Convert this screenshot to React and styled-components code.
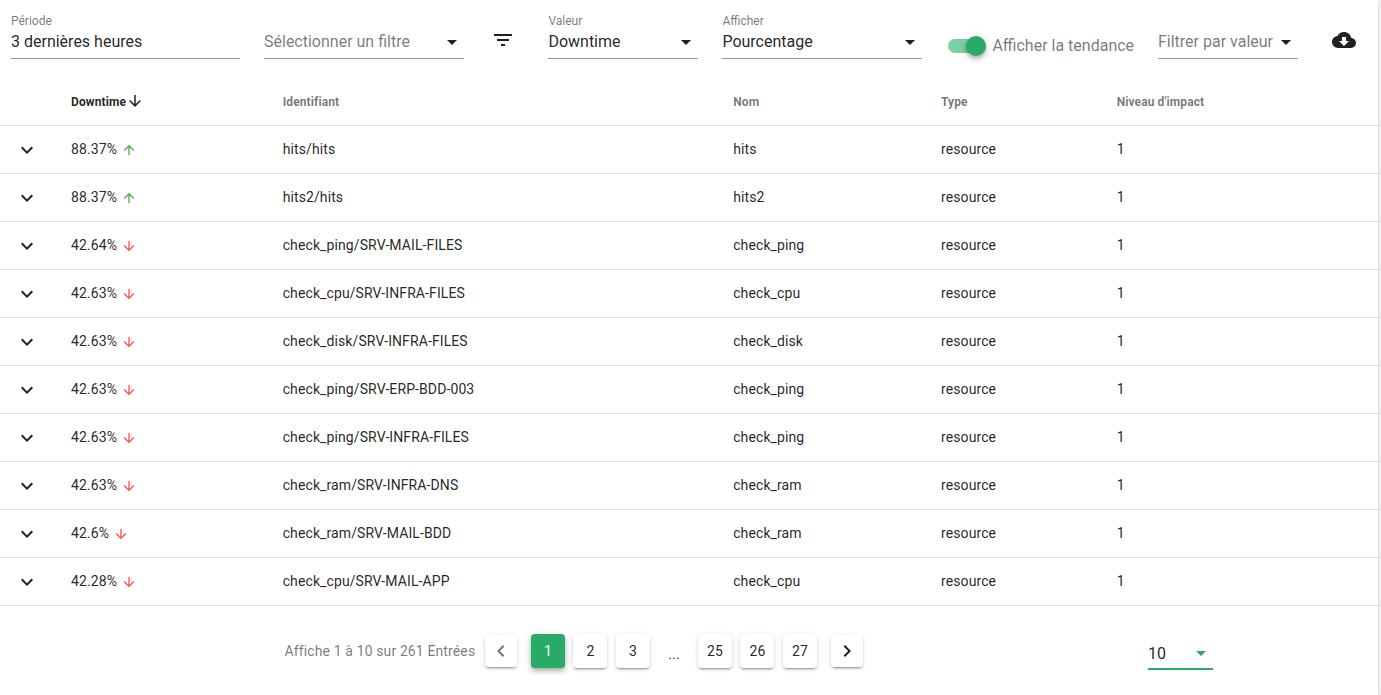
import React from "react";
import styled, { createGlobalStyle } from "styled-components";

const GlobalStyle = createGlobalStyle`
  *, *::before, *::after { box-sizing: border-box; }
  html, body { margin: 0; height: 100%; overflow: hidden; }
  body { background: #f7f7f7; font-family: Roboto, "Liberation Sans", sans-serif; color: rgba(0, 0, 0, 0.87); }
  button { font-family: inherit; }
`;

const PATHS = {
  menuDown: "M7,10L12,15L17,10H7Z",
  filter: "M6,13H18V11H6M3,6V8H21V6M10,18H14V16H10V18Z",
  cloud:
    "M17,13L12,18L7,13H10V9H14V13M19.35,10.03C18.67,6.59 15.64,4 12,4C9.11,4 6.6,5.64 5.35,8.03C2.34,8.36 0,10.9 0,14A6,6 0 0,0 6,20H19A5,5 0 0,0 24,15C24,12.36 21.95,10.22 19.35,10.03Z",
  arrowDown:
    "M11,4H13V16L18.5,10.5L19.92,11.92L12,19.84L4.08,11.92L5.5,10.5L11,16V4Z",
  arrowUp:
    "M13,20H11V8L5.5,13.5L4.08,12.08L12,4.16L19.92,12.08L18.5,13.5L13,8V20Z",
  chevronDown: "M7.41,8.58L12,13.17L16.59,8.58L18,10L12,16L6,10L7.41,8.58Z",
  chevronLeft: "M15.41,16.58L10.83,12L15.41,7.41L14,6L8,12L14,18L15.41,16.58Z",
  chevronRight: "M8.59,16.58L13.17,12L8.59,7.41L10,6L16,12L10,18L8.59,16.58Z",
};

const Svg = styled.svg`
  display: block;
  flex: none;
  width: ${(p) => p.$size}px;
  height: ${(p) => p.$size}px;
  fill: currentColor;
`;

const Icon = ({ name, size = 24 }) => (
  <Svg viewBox="0 0 24 24" $size={size} aria-hidden="true">
    <path d={PATHS[name]} />
  </Svg>
);

const Card = styled.main`
  width: 1378px;
  height: 695px;
  background: #fff;
  box-shadow: 0 3px 1px -2px rgba(0, 0, 0, 0.2), 0 2px 2px 0 rgba(0, 0, 0, 0.14),
    0 1px 5px 0 rgba(0, 0, 0, 0.12);
`;

const Toolbar = styled.header`
  display: flex;
  align-items: flex-start;
  height: 78px;
  padding: 14px 0 0 11px;
`;

const Field = styled.div`
  width: ${(p) => p.$width}px;
  height: 45px;
  margin-right: ${(p) => p.$gap}px;
  border-bottom: 1px solid #949494;
`;

const Label = styled.div`
  height: 12px;
  font-size: 12px;
  line-height: 14px;
  color: rgba(0, 0, 0, 0.54);
`;

const Control = styled.div`
  display: flex;
  align-items: center;
  justify-content: space-between;
  height: 32px;
  font-size: 16px;
  white-space: nowrap;
`;

const Value = styled.span`
  padding-bottom: 2px;
  color: ${(p) => (p.$muted ? "rgba(0, 0, 0, 0.54)" : "inherit")};
`;

const IconButton = styled.button`
  display: grid;
  place-items: center;
  width: 36px;
  height: 36px;
  margin: 8px ${(p) => p.$after || 0}px 0 0;
  padding: 0;
  border: 0;
  background: none;
  color: inherit;
`;

const Switch = styled.label`
  display: flex;
  align-items: center;
  width: 186px;
  height: 24px;
  margin: 20px 24px 0 2px;
  color: rgba(0, 0, 0, 0.54);
  font-size: 16px;
  white-space: nowrap;
`;

const SwitchText = styled.span`
  padding-bottom: 2px;
`;

const Track = styled.span`
  display: flex;
  align-items: center;
  justify-content: flex-end;
  flex: none;
  width: 36px;
  height: 14px;
  margin-right: 8.4px;
  border-radius: 8px;
  background: #7dcfa4;
`;

const Thumb = styled.span`
  flex: none;
  width: 20px;
  height: 20px;
  margin-right: -2px;
  border-radius: 50%;
  background: #27ab66;
  box-shadow: 0 2px 4px -1px rgba(0, 0, 0, 0.2), 0 4px 5px 0 rgba(0, 0, 0, 0.14),
    0 1px 10px 0 rgba(0, 0, 0, 0.12);
`;

const Row = styled.div`
  display: grid;
  grid-template-columns: 55px 211.7px 450.5px 207.8px 175.7px 1fr;
  height: 48px;
  border-bottom: 1px solid #e0e0e0;
  font-size: 14px;
  letter-spacing: 0.1px;
`;

const HeadRow = styled(Row)`
  font-size: 12px;
  font-weight: 700;
  color: rgba(0, 0, 0, 0.54);
`;

const Cell = styled.div`
  display: flex;
  align-items: center;
  padding: 0 0 ${(p) => (p.$body ? 2 : 0)}px ${(p) => (p.$toggle ? 15 : 16)}px;
  color: ${(p) => (p.$sorted ? "rgba(0, 0, 0, 0.87)" : "inherit")};
  white-space: nowrap;
`;

const SortMark = styled.span`
  padding-bottom: 1px;
`;

const Trend = styled.span`
  margin: 2px 0 0 3.6px;
  color: ${(p) => (p.$up ? "#4caf50" : "#ff5252")};
`;

const Footer = styled.footer`
  display: flex;
  align-items: flex-start;
  height: 89px;
  padding: 28px 0 0 284.6px;
`;

const Summary = styled.div`
  width: 200.4px;
  font-size: 14px;
  line-height: 34px;
  letter-spacing: 0.12px;
  color: rgba(0, 0, 0, 0.54);
  white-space: nowrap;
`;

const Pages = styled.div`
  display: flex;
  gap: 8.5px;
  margin: 0 14px;
`;

const raised = "0 3px 1px -2px rgba(0,0,0,.2), 0 2px 2px 0 rgba(0,0,0,.14), 0 1px 5px 0 rgba(0,0,0,.12)";
const lifted = "0 2px 4px -1px rgba(0,0,0,.2), 0 4px 5px 0 rgba(0,0,0,.14), 0 1px 10px 0 rgba(0,0,0,.12)";

const Page = styled.button`
  width: 34px;
  height: 34px;
  padding: 0;
  border: 0;
  border-radius: 4px;
  font-size: 14px;
  color: ${(p) => (p.$active ? "#fff" : "rgba(0, 0, 0, 0.87)")};
  background: ${(p) => (p.$active ? "#27ab66" : "#fff")};
  box-shadow: ${(p) => (p.$active ? lifted : raised)};
`;

const More = styled.span`
  width: 31px;
  font-size: 14px;
  line-height: 41px;
  height: 34px;
  text-align: center;
  letter-spacing: 0.15px;
  color: rgba(0, 0, 0, 0.87);
`;

const Nav = styled.button`
  display: grid;
  place-items: center;
  width: 32px;
  height: 32px;
  margin-top: 1px;
  padding: 0;
  border: 0;
  border-radius: 4px;
  background: #fff;
  color: ${(p) => (p.$off ? "rgba(0, 0, 0, 0.54)" : "rgba(0, 0, 0, 0.87)")};
  box-shadow: ${raised};
`;

const PageSize = styled.div`
  display: flex;
  align-items: center;
  justify-content: space-between;
  width: 65px;
  height: 33px;
  margin: 3px 0 0 285px;
  padding-top: 1px;
  border-bottom: 2px solid #27ab66;
  font-size: 16px;
`;

const Accent = styled.span`
  color: #27ab66;
`;

const Select = ({ label, value, width, gap, muted, plain }) => (
  <Field $width={width} $gap={gap}>
    <Label>{label}</Label>
    <Control>
      <Value $muted={muted}>{value}</Value>
      {!plain && <Icon name="menuDown" />}
    </Control>
  </Field>
);

const rows = [
  ["88.37%", true, "hits/hits", "hits"],
  ["88.37%", true, "hits2/hits", "hits2"],
  ["42.64%", false, "check_ping/SRV-MAIL-FILES", "check_ping"],
  ["42.63%", false, "check_cpu/SRV-INFRA-FILES", "check_cpu"],
  ["42.63%", false, "check_disk/SRV-INFRA-FILES", "check_disk"],
  ["42.63%", false, "check_ping/SRV-ERP-BDD-003", "check_ping"],
  ["42.63%", false, "check_ping/SRV-INFRA-FILES", "check_ping"],
  ["42.63%", false, "check_ram/SRV-INFRA-DNS", "check_ram"],
  ["42.6%", false, "check_ram/SRV-MAIL-BDD", "check_ram"],
  ["42.28%", false, "check_cpu/SRV-MAIL-APP", "check_cpu"],
];

export default function App() {
  return (
    <>
      <GlobalStyle />
      <Card>
        <Toolbar>
          <Select label="Période" value="3 dernières heures" width={229} gap={24} plain />
          <Select value="Sélectionner un filtre" width={200.3} gap={20.3} muted />
          <IconButton $after={27.8}>
            <Icon name="filter" />
          </IconButton>
          <Select label="Valeur" value="Downtime" width={150} gap={24} />
          <Select label="Afficher" value="Pourcentage" width={200} gap={23.6} />
          <Switch>
            <Track>
              <Thumb />
            </Track>
            <SwitchText>Afficher la tendance</SwitchText>
          </Switch>
          <Select value="Filtrer par valeur" width={140} gap={28} muted />
          <IconButton>
            <Icon name="cloud" />
          </IconButton>
        </Toolbar>

        <HeadRow>
          <Cell />
          <Cell $sorted>
            Downtime
            <SortMark>
              <Icon name="arrowDown" size={18} />
            </SortMark>
          </Cell>
          <Cell>Identifiant</Cell>
          <Cell>Nom</Cell>
          <Cell>Type</Cell>
          <Cell>Niveau d'impact</Cell>
        </HeadRow>
        {rows.map(([value, up, id, name]) => (
          <Row key={id}>
            <Cell $toggle>
              <Icon name="chevronDown" />
            </Cell>
            <Cell $body>
              {value}
              <Trend $up={up}>
                <Icon name={up ? "arrowUp" : "arrowDown"} size={16} />
              </Trend>
            </Cell>
            <Cell $body>{id}</Cell>
            <Cell $body>{name}</Cell>
            <Cell $body>resource</Cell>
            <Cell $body>1</Cell>
          </Row>
        ))}

        <Footer>
          <Summary>Affiche 1 à 10 sur 261 Entrées</Summary>
          <Nav $off>
            <Icon name="chevronLeft" />
          </Nav>
          <Pages>
            <Page $active>1</Page>
            <Page>2</Page>
            <Page>3</Page>
            <More>...</More>
            <Page>25</Page>
            <Page>26</Page>
            <Page>27</Page>
          </Pages>
          <Nav>
            <Icon name="chevronRight" />
          </Nav>
          <PageSize>
            10
            <Accent>
              <Icon name="menuDown" />
            </Accent>
          </PageSize>
        </Footer>
      </Card>
    </>
  );
}
